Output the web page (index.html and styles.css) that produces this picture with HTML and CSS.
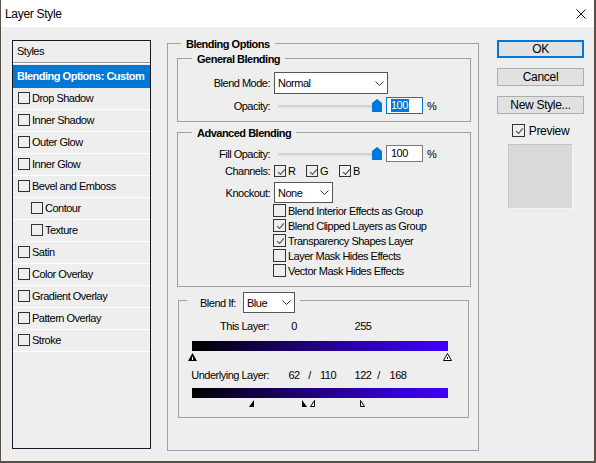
FILE: index.html
```html
<!DOCTYPE html>
<html lang="en">
<head>
  <meta charset="UTF-8" />
  <title>Layer Style</title>
  <link rel="stylesheet" href="styles.css">
</head>
<body>
  <div class="window">
    <!-- Barra de titulo -->
    <div class="titlebar">
      <span class="title">Layer Style</span>
      <svg class="close" width="10" height="10" viewBox="0 0 10 10"><path d="M0.5 0.5 L9.5 9.5 M9.5 0.5 L0.5 9.5" stroke="#000" stroke-width="1" fill="none"/></svg>
    </div>

    <div class="content">
      <!-- Lista de estilos -->
      <div class="styles-panel">
        <div class="styles-head">Styles</div>
        <div class="style-row selected">Blending Options: Custom</div>
        <div class="style-row"><span class="cb"></span>Drop Shadow</div>
        <div class="style-row"><span class="cb"></span>Inner Shadow</div>
        <div class="style-row"><span class="cb"></span>Outer Glow</div>
        <div class="style-row"><span class="cb"></span>Inner Glow</div>
        <div class="style-row"><span class="cb"></span>Bevel and Emboss</div>
        <div class="style-row sub"><span class="cb"></span>Contour</div>
        <div class="style-row sub"><span class="cb"></span>Texture</div>
        <div class="style-row"><span class="cb"></span>Satin</div>
        <div class="style-row"><span class="cb"></span>Color Overlay</div>
        <div class="style-row"><span class="cb"></span>Gradient Overlay</div>
        <div class="style-row"><span class="cb"></span>Pattern Overlay</div>
        <div class="style-row"><span class="cb"></span>Stroke</div>
      </div>

      <!-- Opcoes de mesclagem -->
      <div class="group outer">
        <div class="legend">Blending Options</div>

        <div class="group inner general">
          <div class="legend">General Blending</div>
          <div class="form-row first">
            <span class="label">Blend Mode:</span>
            <div class="select mode"><span>Normal</span><svg width="9" height="5" viewBox="0 0 9 5"><path d="M0.5 0.5 L4.5 4.5 L8.5 0.5" stroke="#333" fill="none"/></svg></div>
          </div>
          <div class="form-row">
            <span class="label">Opacity:</span>
            <div class="slider"><div class="track"></div><svg class="thumb" width="10" height="13" viewBox="0 0 10 13"><path d="M0 4 L5 0 L10 4 V13 H0 Z" fill="#0078d7"/></svg></div>
            <div class="num-input focused"><span class="sel">100</span></div>
            <span class="pct">%</span>
          </div>
        </div>

        <div class="group inner advanced">
          <div class="legend">Advanced Blending</div>
          <div class="form-row first">
            <span class="label">Fill Opacity:</span>
            <div class="slider"><div class="track"></div><svg class="thumb" width="10" height="13" viewBox="0 0 10 13"><path d="M0 4 L5 0 L10 4 V13 H0 Z" fill="#0078d7"/></svg></div>
            <div class="num-input">100</div>
            <span class="pct">%</span>
          </div>
          <div class="form-row channels">
            <span class="label">Channels:</span>
            <span class="chan"><span class="cb checked"></span>R</span>
            <span class="chan"><span class="cb checked"></span>G</span>
            <span class="chan"><span class="cb checked"></span>B</span>
          </div>
          <div class="form-row knockout">
            <span class="label">Knockout:</span>
            <div class="select ko"><span>None</span><svg width="9" height="5" viewBox="0 0 9 5"><path d="M0.5 0.5 L4.5 4.5 L8.5 0.5" stroke="#333" fill="none"/></svg></div>
          </div>
          <div class="check-list">
            <div class="check-row"><span class="cb"></span>Blend Interior Effects as Group</div>
            <div class="check-row"><span class="cb checked"></span>Blend Clipped Layers as Group</div>
            <div class="check-row"><span class="cb checked"></span>Transparency Shapes Layer</div>
            <div class="check-row"><span class="cb"></span>Layer Mask Hides Effects</div>
            <div class="check-row"><span class="cb"></span>Vector Mask Hides Effects</div>
          </div>
        </div>

        <div class="group inner blendif">
          <div class="legend blendif-legend">
            <span class="bi-label">Blend If:</span>
            <div class="select bi"><span>Blue</span><svg width="9" height="5" viewBox="0 0 9 5"><path d="M0.5 0.5 L4.5 4.5 L8.5 0.5" stroke="#333" fill="none"/></svg></div>
          </div>

          <div class="value-row first">
            <span class="vlabel">This Layer:</span>
            <span class="num n1">0</span><span class="slash"></span><span class="num n2"></span>
            <span class="num n3">255</span><span class="slash"></span><span class="num n4"></span>
          </div>
          <div class="bar-wrap">
            <div class="bar"></div>
            <svg class="mark" style="left:-4px" width="9" height="8" viewBox="0 0 9 8"><path d="M4.5 0 L9 8 H0 Z" fill="#000"/><rect x="4" y="4" width="1" height="3" fill="#fff"/></svg>
            <svg class="mark" style="left:251px" width="9" height="8" viewBox="0 0 9 8"><path d="M4.5 0.5 L8.5 7.5 H0.5 Z" fill="#fff" stroke="#000"/><rect x="4" y="4" width="1" height="2" fill="#000"/></svg>
          </div>

          <div class="value-row second">
            <span class="vlabel">Underlying Layer:</span>
            <span class="num n1">62</span><span class="slash">/</span><span class="num n2">110</span>
            <span class="num n3">122</span><span class="slash">/</span><span class="num n4">168</span>
          </div>
          <div class="bar-wrap">
            <div class="bar"></div>
            <svg class="mark" style="left:57px" width="5" height="7" viewBox="0 0 5 7"><path d="M5 0 V7 H0 Z" fill="#000"/></svg>
            <svg class="mark" style="left:110px" width="5" height="7" viewBox="0 0 5 7"><path d="M0 0 V7 H5 Z" fill="#000"/></svg>
            <svg class="mark" style="left:118px" width="5" height="7" viewBox="0 0 5 7"><path d="M4.5 0.5 V6.5 H0.5 Z" fill="#fff" stroke="#000"/></svg>
            <svg class="mark" style="left:168px" width="5" height="7" viewBox="0 0 5 7"><path d="M0.5 0.5 V6.5 H4.5 Z" fill="#fff" stroke="#000"/></svg>
          </div>
        </div>
      </div>

      <!-- Botoes -->
      <div class="side">
        <div class="btn default">OK</div>
        <div class="btn">Cancel</div>
        <div class="btn">New Style...</div>
        <div class="preview-row"><span class="cb checked"></span>Preview</div>
        <div class="preview-box"></div>
      </div>
    </div>
  </div>
</body>
</html>
```

FILE: styles.css
```css
/* Janela */
body {
  margin: 0;
  background: #5b5247;
  font-family: "Liberation Sans", Arial, sans-serif;
  font-size: 11px;
  letter-spacing: -0.5px;
  color: #000;
}
.window {
  width: 596px;
  height: 463px;
  box-sizing: border-box;
  background: #eeeeee;
  border: solid #5b5247;
  border-width: 0 2px 2px 1px;
  overflow: hidden;
}
.titlebar {
  height: 27px;
  background: #fff;
  display: flex;
  align-items: center;
  justify-content: space-between;
  padding: 0 8px 0 4px;
  font-size: 12px;
  letter-spacing: -0.3px;
}
.content {
  display: flex;
  align-items: flex-start;
  padding: 13px 0 0 11px;
}

/* Checkbox generico */
.cb {
  display: inline-block;
  width: 12px;
  height: 12px;
  box-sizing: border-box;
  border: 1px solid #333;
  flex: none;
  position: relative;
}
.cb.checked::after {
  content: "";
  position: absolute;
  left: 2px;
  top: 1px;
  width: 6px;
  height: 3px;
  border-left: 1px solid #444;
  border-bottom: 1px solid #444;
  transform: rotate(-50deg) translate(-1px, 2px);
}

/* Lista de estilos */
.styles-panel {
  width: 139px;
  height: 409px;
  box-sizing: border-box;
  border: 1px solid #1a1a1a;
}
.styles-head {
  height: 21px;
  line-height: 20px;
  padding-left: 4px;
  border-bottom: 1px solid #9a9a9a;
  box-shadow: 0 1px 0 #fff;
  margin-bottom: 2px;
}
.style-row {
  height: 22px;
  box-sizing: border-box;
  border-bottom: 1px solid #fff;
  display: flex;
  align-items: center;
  gap: 2px;
  padding: 0 0 1px 5px;
}
.style-row.sub {
  padding-left: 18px;
}
.style-row.selected {
  height: 23px;
  border-bottom: 0;
  background: #0078d7;
  color: #fff;
  font-weight: bold;
  padding-left: 4px;
}

/* Grupos */
.group {
  border: 1px solid #a0a0a0;
  box-sizing: border-box;
}
.group.outer {
  width: 312px;
  height: 408px;
  margin: 3px 0 0 16px;
}
.legend {
  display: table;
  margin: -7px 0 0 13px;
  padding: 0 5px;
  background: #eeeeee;
  font-weight: bold;
  line-height: 14px;
}
.group.inner .legend {
  margin-left: 14px;
}
.general {
  width: 294px;
  margin: 7px 0 0 9px;
  padding-bottom: 7px;
}
.advanced {
  width: 294px;
  margin: 10px 0 0 9px;
  padding-bottom: 9px;
}

.form-row {
  display: flex;
  align-items: center;
  margin-top: 3px;
}
.form-row.first {
  margin-top: 6px;
}
.advanced .form-row.first {
  margin-top: 5px;
}
.label {
  width: 92px;
  margin-right: 4px;
  text-align: right;
}
.select {
  height: 22px;
  box-sizing: border-box;
  border: 1px solid #555;
  background: #fff;
  display: flex;
  align-items: center;
  justify-content: space-between;
  padding: 0 3px;
}
.select.mode {
  width: 114px;
}
.select.ko {
  width: 59px;
  height: 21px;
}
.slider {
  position: relative;
  width: 108px;
  height: 17px;
}
.track {
  position: absolute;
  left: 4px;
  top: 8px;
  width: 96px;
  height: 3px;
  background: #dadada;
  border-top: 1px solid #cfcfcf;
  box-sizing: border-box;
}
.thumb {
  position: absolute;
  left: 98px;
  top: 2px;
}
.num-input {
  width: 37px;
  height: 17px;
  box-sizing: border-box;
  margin-left: 4px;
  border: 1px solid #7a7a7a;
  background: #fff;
  padding-left: 4px;
  line-height: 15px;
}
.num-input.focused {
  border-color: #0078d7;
}
.sel {
  background: #0078d7;
  color: #fff;
  display: inline-block;
  line-height: 13px;
  padding-right: 1px;
}
.pct {
  margin-left: 4px;
}

.channels {
  margin-top: 2px;
  height: 13px;
}
.chan {
  display: flex;
  align-items: center;
  gap: 2px;
  width: 32px;
}
.chan:nth-of-type(3) {
  width: 33px;
}
.knockout {
  margin-top: 5px;
}
.check-list {
  margin: 1px 0 0 95px;
  display: flex;
  flex-direction: column;
  gap: 2px;
}
.check-row {
  display: flex;
  align-items: center;
  gap: 2px;
  height: 13px;
}
.check-row .cb {
  width: 13px;
  height: 13px;
}

/* Blend If */
.blendif {
  width: 291px;
  height: 118px;
  margin: 13px 0 0 10px;
}
.blendif-legend {
  display: flex;
  align-items: center;
  margin: -9px 0 0 8px !important;
  padding: 0 5px 0 13px;
  font-weight: normal;
  width: max-content;
}
.bi-label {
  width: 43px;
}
.select.bi {
  width: 52px;
  height: 21px;
}
.value-row {
  display: flex;
  line-height: 14px;
  margin-top: 6px;
}
.value-row.second {
  margin-top: 7px;
}
.vlabel {
  width: 90px;
  text-align: right;
}
.num {
  width: 22px;
  text-align: center;
}
.slash {
  width: 9px;
  text-align: center;
}
.n1 { margin-left: 14px; }
.n2 { margin-left: 3px; }
.n3 { margin-left: 13px; }
.n4 { margin-left: 4px; }

.bar-wrap {
  position: relative;
  width: 256px;
  height: 20px;
  margin: 8px 0 0 13px;
}
.value-row.second + .bar-wrap {
  margin-top: 6px;
}
.bar {
  height: 10px;
  background: linear-gradient(to right, #000 0%, #1c0070 40%, #4000ff 100%);
}
.mark {
  position: absolute;
  top: 12px;
}

/* Coluna de botoes */
.side {
  width: 87px;
  margin-left: 18px;
  display: flex;
  flex-direction: column;
  align-items: center;
}
.btn {
  width: 100%;
  height: 18px;
  box-sizing: border-box;
  border: 1px solid #adadad;
  background: #e1e1e1;
  text-align: center;
  line-height: 16px;
  font-size: 12px;
  letter-spacing: -0.3px;
  margin-bottom: 10px;
}
.btn.default {
  border: 2px solid #0078d7;
  line-height: 14px;
}
.preview-row {
  display: flex;
  align-items: center;
  gap: 4px;
  height: 13px;
  font-size: 12px;
  letter-spacing: -0.3px;
}
.preview-row .cb {
  width: 13px;
  height: 13px;
}
.preview-box {
  width: 65px;
  height: 65px;
  box-sizing: border-box;
  margin: 7px 0 0 -1px;
  background: #d9d9d9;
  border: 1px solid #c4c4c4;
  border-right-color: #f5f5f5;
  border-bottom-color: #f5f5f5;
}
```
